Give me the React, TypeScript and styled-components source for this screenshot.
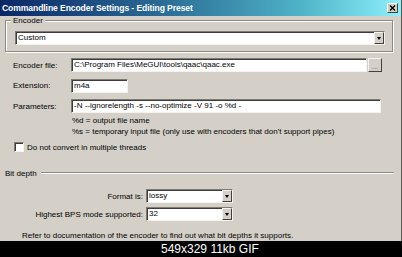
import React from "react";
import styled, { createGlobalStyle } from "styled-components";

const Global = createGlobalStyle`
  html, body { margin: 0; padding: 0; background: #000; }
  body {
    width: 402px;
    height: 257px;
    overflow: hidden;
    font-family: "Liberation Sans", Arial, sans-serif;
  }
`;

const Frame = styled.div`
  width: 402px;
  height: 257px;
  display: flex;
  flex-direction: column;
`;

const Window = styled.div`
  height: 241px;
  box-sizing: border-box;
  background: #d4d0c8;
  border-right: 1px solid #5a5852;
  display: flex;
  flex-direction: column;
  overflow: hidden;
  font-size: 8px;
  color: #000;
`;

const TitleBar = styled.div`
  height: 16px;
  flex: none;
  display: flex;
  align-items: center;
  justify-content: space-between;
  padding: 0 3px 0 2px;
  background: linear-gradient(to right, #0b2767 0%, #2a6b95 40%, #4fb3c8 75%, #8ef0fb 100%);
  color: #fff;
  font-weight: bold;
  font-size: 8.6px;
  letter-spacing: -0.1px;
`;

const CloseButton = styled.div`
  width: 11px;
  height: 10px;
  box-sizing: border-box;
  background: #d4d0c8;
  border: 1px solid;
  border-color: #fff #404040 #404040 #fff;
  display: flex;
  align-items: center;
  justify-content: center;
`;

const Group = styled.fieldset`
  margin: 0 0 0 5px;
  width: 388px;
  box-sizing: border-box;
  padding: 6px 7px 6px 9px;
  border: 1px solid #8d8a84;
  box-shadow: inset 1px 1px 0 #fff, 1px 1px 0 #fff;
`;

const Legend = styled.legend`
  font-size: 8px;
  line-height: 9px;
  padding: 0 2px;
  margin-left: -4px;
  background: #d4d0c8;
`;

const Sunken = styled.div<{ $w?: number }>`
  box-sizing: border-box;
  height: 14px;
  width: ${(p) => (p.$w ? `${p.$w}px` : "auto")};
  background: #fff;
  border: 1px solid;
  border-color: #7d7b76 #f4f3f0 #f4f3f0 #7d7b76;
  box-shadow: inset 1px 1px 0 #3c3c3c;
  display: flex;
  align-items: center;
`;

const FieldText = styled.span`
  flex: 1;
  padding-left: 2px;
  line-height: 12px;
  white-space: nowrap;
  overflow: hidden;
`;

const DropButton = styled.div`
  width: 10px;
  height: 12px;
  box-sizing: border-box;
  flex: none;
  background: #d4d0c8;
  border: 1px solid;
  border-color: #f4f3f0 #404040 #404040 #f4f3f0;
  display: flex;
  align-items: center;
  justify-content: center;
  &::after {
    content: "";
    border-left: 2.5px solid transparent;
    border-right: 2.5px solid transparent;
    border-top: 3px solid #000;
  }
`;

const Form = styled.div`
  margin-top: 6px;
  padding-left: 13px;
  display: flex;
  flex-direction: column;
  gap: 6.5px;
`;

const Row = styled.div`
  display: grid;
  grid-template-columns: 58px auto;
  align-items: center;
  height: 14px;
`;

const Label = styled.span`
  white-space: nowrap;
`;

const FieldWithButton = styled.div`
  display: flex;
  gap: 1px;
`;

const BrowseButton = styled.div`
  width: 14px;
  height: 14px;
  box-sizing: border-box;
  background: #d4d0c8;
  border: 1px solid;
  border-color: #f4f3f0 #404040 #404040 #f4f3f0;
  display: flex;
  align-items: flex-end;
  justify-content: center;
  font-size: 7px;
  line-height: 8px;
  color: #555;
`;

const Hints = styled.div`
  margin-top: 2px;
  padding-left: 72px;
  line-height: 11px;
  white-space: nowrap;
`;

const CheckRow = styled.label`
  margin-top: 5px;
  padding-left: 14px;
  height: 10px;
  display: flex;
  align-items: center;
  gap: 3px;
`;

const CheckBox = styled.span`
  width: 10px;
  height: 10px;
  box-sizing: border-box;
  background: #fff;
  border: 1px solid;
  border-color: #7d7b76 #f4f3f0 #f4f3f0 #7d7b76;
  box-shadow: inset 1px 1px 0 #3c3c3c;
`;

const Separator = styled.div`
  margin-top: 16px;
  padding: 0 7px 0 5px;
  height: 10px;
  display: flex;
  align-items: center;
  gap: 4px;
  &::after {
    content: "";
    flex: 1;
    height: 0;
    border-top: 1px solid #8d8a84;
    border-bottom: 1px solid #fff;
  }
`;

const Options = styled.div`
  margin-top: 11px;
  display: flex;
  flex-direction: column;
  gap: 4px;
`;

const OptionRow = styled.div`
  display: grid;
  grid-template-columns: 143px 87px;
  column-gap: 3px;
  align-items: center;
  height: 14px;
`;

const OptionLabel = styled.span`
  text-align: right;
  white-space: nowrap;
`;

const Note = styled.div`
  margin-top: 9px;
  padding-left: 22px;
  line-height: 11px;
  white-space: nowrap;
`;

const Caption = styled.div`
  height: 16px;
  flex: none;
  background: #000;
  color: #fff;
  font-family: "Liberation Sans", Arial, sans-serif;
  font-size: 12px;
  line-height: 16px;
  padding-left: 161px;
  white-space: nowrap;
`;

const Combo: React.FC<{ value: string; w?: number }> = ({ value, w }) => (
  <Sunken $w={w}>
    <FieldText>{value}</FieldText>
    <DropButton />
  </Sunken>
);

export default function App() {
  return (
    <Frame>
      <Global />
      <Window>
        <TitleBar>
          <span>Commandline Encoder Settings - Editing Preset</span>
          <CloseButton>
            <svg width="7" height="6" viewBox="0 0 7 6">
              <path d="M1 0.5 L6 5.5 M6 0.5 L1 5.5" stroke="#000" strokeWidth="1.4" />
            </svg>
          </CloseButton>
        </TitleBar>

        <Group>
          <Legend>Encoder</Legend>
          <Combo value="Custom" />
        </Group>

        <Form>
          <Row>
            <Label>Encoder file:</Label>
            <FieldWithButton>
              <Sunken $w={296}>
                <FieldText>C:\Program Files\MeGUI\tools\qaac\qaac.exe</FieldText>
              </Sunken>
              <BrowseButton>...</BrowseButton>
            </FieldWithButton>
          </Row>
          <Row>
            <Label>Extension:</Label>
            <Sunken $w={57}>
              <FieldText>m4a</FieldText>
            </Sunken>
          </Row>
          <Row>
            <Label>Parameters:</Label>
            <Sunken $w={310}>
              <FieldText>-N --ignorelength -s --no-optimize -V 91 -o %d -</FieldText>
            </Sunken>
          </Row>
        </Form>

        <Hints>
          <div>%d = output file name</div>
          <div>%s = temporary input file (only use with encoders that don't support pipes)</div>
        </Hints>

        <CheckRow>
          <CheckBox />
          <span>Do not convert in multiple threads</span>
        </CheckRow>

        <Separator>Bit depth</Separator>

        <Options>
          <OptionRow>
            <OptionLabel>Format is:</OptionLabel>
            <Combo value="lossy" />
          </OptionRow>
          <OptionRow>
            <OptionLabel>Highest BPS mode supported:</OptionLabel>
            <Combo value="32" />
          </OptionRow>
        </Options>

        <Note>Refer to documentation of the encoder to find out what bit depths it supports.</Note>
      </Window>
      <Caption>549x329 11kb GIF</Caption>
    </Frame>
  );
}
